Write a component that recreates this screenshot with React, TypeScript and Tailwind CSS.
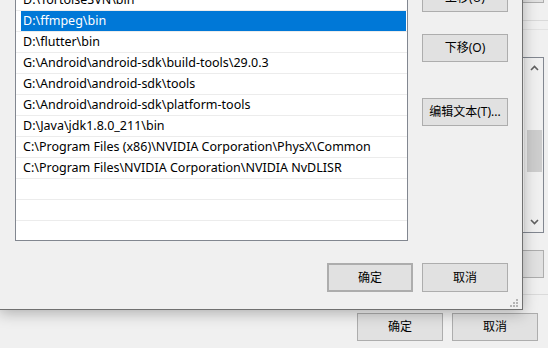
import React from "react";

const FONT = { fontFamily: '"Noto Sans", "Noto Sans CJK SC", sans-serif' };

const rows = [
  "D:\\TortoiseSVN\\bin",
  "D:\\ffmpeg\\bin",
  "D:\\flutter\\bin",
  "G:\\Android\\android-sdk\\build-tools\\29.0.3",
  "G:\\Android\\android-sdk\\tools",
  "G:\\Android\\android-sdk\\platform-tools",
  "D:\\Java\\jdk1.8.0_211\\bin",
  "C:\\Program Files (x86)\\NVIDIA Corporation\\PhysX\\Common",
  "C:\\Program Files\\NVIDIA Corporation\\NVIDIA NvDLISR",
  "",
  "",
  "",
];

function Btn({
  children,
  className = "",
}: {
  children?: React.ReactNode;
  className?: string;
}) {
  return (
    <div
      className={
        "flex items-center justify-center bg-[#e1e1e1] border border-[#adadad] text-[12px] text-black leading-none " +
        className
      }
    >
      {children}
    </div>
  );
}

function SizeGrip() {
  return (
    <svg width="9" height="9" viewBox="0 0 9 9" className="absolute right-[3px] bottom-[1px]">
      {[
        [6, 0],
        [3, 3],
        [6, 3],
        [0, 6],
        [3, 6],
        [6, 6],
      ].map(([x, y], i) => (
        <rect key={i} x={x} y={y} width="2" height="2" fill="#b4b4b4" />
      ))}
    </svg>
  );
}

function BackWindow() {
  return (
    <div className="absolute left-0 top-[-25px] w-[548px] h-[380px] bg-[#f0f0f0] flex flex-col items-end">
      <Btn className="w-[86px] h-[28px] mr-[4px]" />
      <div className="w-full h-px bg-[#d9d9d9] mt-[17px]" />
      <div className="w-full h-px bg-[#e2e2e2] mt-[8px]" />
      <div className="w-[420px] h-[176px] mt-[27px] mr-[4px] border border-[#828790] bg-white flex justify-end">
        <div className="w-[19px] h-full bg-[#f0f0f0] flex flex-col items-center border-l border-[#e6e6e6]">
          <div className="h-[20px] flex items-center justify-center w-full">
            <svg width="9" height="6" viewBox="0 0 9 6">
              <path d="M1 5 L4.5 1.5 L8 5" fill="none" stroke="#606060" strokeWidth="1.6" />
            </svg>
          </div>
          <div className="flex-1 w-full flex flex-col items-center">
            <div className="w-[15px] h-[42px] mt-[52px] bg-[#cdcdcd]" />
          </div>
          <div className="h-[20px] flex items-center justify-center w-full">
            <svg width="9" height="6" viewBox="0 0 9 6">
              <path d="M1 1 L4.5 4.5 L8 1" fill="none" stroke="#606060" strokeWidth="1.6" />
            </svg>
          </div>
        </div>
      </div>
      <Btn className="w-[86px] h-[28px] mt-[17px] mr-[4px]" />
      <div className="w-full h-px bg-[#dadada] mt-[16px]" />
      <div className="flex gap-[9px] mt-[18px] mr-[10px]">
        <Btn className="w-[86px] h-[28px]">确定</Btn>
        <Btn className="w-[86px] h-[28px]">取消</Btn>
      </div>
    </div>
  );
}

function FrontDialog() {
  return (
    <div className="absolute left-[-1px] top-[-17px] w-[524px] h-[327px] border border-[#707070] bg-[#f0f0f0] shadow-[0_3px_14px_rgba(0,0,0,0.28)] flex flex-col">
      <div className="flex pl-[15px] pr-[14px] gap-[14px] h-[257px]">
        <div className="w-[393px] h-[252px] mt-[5px] border border-[#828790] bg-white overflow-hidden">
          {rows.map((r, i) => (
            <div key={i} className="h-[21px] shrink-0 border-b border-[#ececec]">
              {i === 1 ? (
                <div className="h-[20px] ml-[5px] mr-[1px] bg-[#0078d7] text-white flex items-center pl-[2px] text-[12.5px] whitespace-nowrap">
                  {r}
                </div>
              ) : (
                <div className="h-[20px] flex items-center pl-[7px] text-[12.5px] text-black whitespace-nowrap">
                  {r}
                </div>
              )}
            </div>
          ))}
        </div>
        <div className="flex flex-col w-[86px]">
          <Btn className="w-[86px] h-[28px]">上移(U)</Btn>
          <Btn className="w-[86px] h-[28px] mt-[22px]">下移(O)</Btn>
          <Btn className="w-[86px] h-[28px] mt-[36px]">编辑文本(T)...</Btn>
        </div>
      </div>
      <div className="flex justify-end gap-[9px] pr-[14px] mt-[22px]">
        <Btn className="w-[86px] h-[29px] border-2 border-[#0078d7]">确定</Btn>
        <Btn className="w-[86px] h-[29px]">取消</Btn>
      </div>
      <SizeGrip />
    </div>
  );
}

export default function App() {
  return (
    <div className="relative w-[548px] h-[348px] bg-[#f0f0f0] overflow-hidden" style={FONT}>
      <BackWindow />
      <FrontDialog />
    </div>
  );
}
